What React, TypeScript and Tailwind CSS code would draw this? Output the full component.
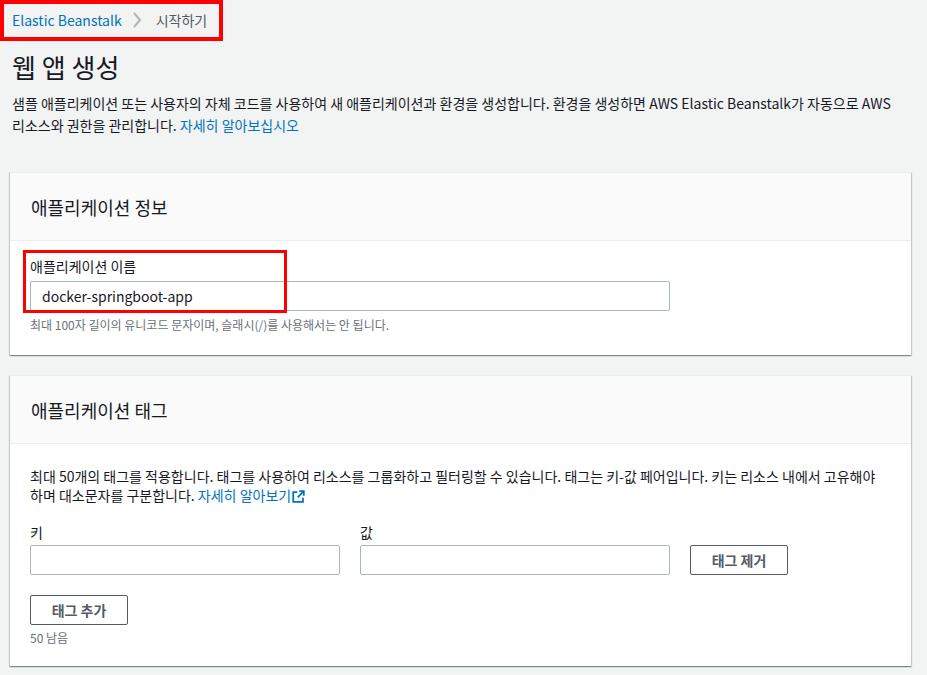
import React from "react";

const font = { fontFamily: '"Noto Sans CJK KR", "Noto Sans", sans-serif' };

function ExtIcon() {
  return (
    <svg width="13" height="13" viewBox="0 0 16 16" className="inline-block ml-[1px] -mt-[2px] align-middle">
      <path d="M9 1.5h5.5V7" fill="none" stroke="#0073bb" strokeWidth="2.2" />
      <path d="M14.5 1.5L7 9" fill="none" stroke="#0073bb" strokeWidth="2.2" />
      <path d="M6.5 2.5H1.5v12h12v-5" fill="none" stroke="#0073bb" strokeWidth="2.2" />
    </svg>
  );
}

const cardCls =
  "bg-white border-t border-[#eaeded] shadow-[0_1px_1px_0_rgba(0,28,36,0.3),1px_1px_1px_0_rgba(0,28,36,0.15),-1px_1px_1px_0_rgba(0,28,36,0.15)]";

export default function App() {
  return (
    <div className="min-h-[675px] w-full bg-[#f2f3f3] text-[#16191f]" style={font}>
      <div className="relative">
        <div className="absolute left-0 top-0 w-[223px] h-[41px] border-[4px] border-[#ff0000] pointer-events-none" />
        <div className="flex items-center h-[40px] pl-[12px] text-[14px] leading-[20px]">
          <span className="text-[#0073bb]">Elastic Beanstalk</span>
          <svg width="10" height="18" viewBox="0 0 10 18" className="ml-[10px] mr-[14px]">
            <path d="M2 2l6 7-6 7" fill="none" stroke="#aab7b8" strokeWidth="2" />
          </svg>
          <span className="text-[#545b64]">시작하기</span>
        </div>
      </div>

      <div className="px-[10px] w-[927px]">
        <div className="pl-[2px] w-[892px]">
          <h1 className="text-[26px] leading-[34px] mt-[10px] text-[#16191f]">웹 앱 생성</h1>
          <p className="text-[14px] leading-[22px] mt-[8px] text-[#16191f] break-keep">
            샘플 애플리케이션 또는 사용자의 자체 코드를 사용하여 새 애플리케이션과 환경을 생성합니다. 환경을 생성하면 AWS Elastic Beanstalk가 자동으로 AWS
            리소스와 권한을 관리합니다. <span className="text-[#0073bb]">자세히 알아보십시오</span>
          </p>
        </div>

        <div className={cardCls + " mt-[36px] w-[901px] relative"}>
          <div className="bg-[#fafafa] border-b border-[#eaeded] h-[68px] flex items-center px-[21px]">
            <h2 className="text-[18px] leading-[24px]">애플리케이션 정보</h2>
          </div>
          <div className="px-[20px] pt-[15px] pb-[22px]">
            <div className="absolute left-[13px] top-[77px] w-[264px] h-[63px] border-[3px] border-[#ff0000] pointer-events-none" />
            <div className="text-[14px] leading-[20px]">애플리케이션 이름</div>
            <div className="mt-[5px] w-[640px] h-[30px] border border-[#aab7b8] rounded-[2px] flex items-center px-[11px] text-[14px]">
              docker-springboot-app
            </div>
            <div className="mt-[6px] text-[12px] leading-[16px] text-[#687078]">
              최대 100자 길이의 유니코드 문자이며, 슬래시(/)를 사용해서는 안 됩니다.
            </div>
          </div>
        </div>

        <div className={cardCls + " mt-[20px] w-[901px]"}>
          <div className="bg-[#fafafa] border-b border-[#eaeded] h-[68px] flex items-center px-[21px]">
            <h2 className="text-[18px] leading-[24px]">애플리케이션 태그</h2>
          </div>
          <div className="px-[20px] pt-[23px] pb-[20px]">
            <p className="text-[14px] leading-[19px] pr-[10px] break-keep">
              최대 50개의 태그를 적용합니다. 태그를 사용하여 리소스를 그룹화하고 필터링할 수 있습니다. 태그는 키-값 페어입니다. 키는 리소스 내에서 고유해야
              하며 대소문자를 구분합니다. <span className="text-[#0073bb]">자세히 알아보기</span>
              <ExtIcon />
            </p>
            <div className="flex items-end mt-[17px]">
              <div className="w-[310px]">
                <div className="text-[14px] leading-[20px]">키</div>
                <div className="mt-[3px] h-[30px] border border-[#aab7b8] rounded-[2px] bg-white" />
              </div>
              <div className="w-[310px] ml-[20px]">
                <div className="text-[14px] leading-[20px]">값</div>
                <div className="mt-[3px] h-[30px] border border-[#aab7b8] rounded-[2px] bg-white" />
              </div>
              <button className="ml-[20px] w-[98px] h-[30px] border border-[#545b64] rounded-[2px] text-[14px] font-bold text-[#545b64] bg-white">
                태그 제거
              </button>
            </div>
            <button className="mt-[20px] w-[98px] h-[30px] border border-[#545b64] rounded-[2px] text-[14px] font-bold text-[#545b64] bg-white">
              태그 추가
            </button>
            <div className="mt-[5px] text-[12px] leading-[16px] text-[#687078]">50 남음</div>
          </div>
        </div>
      </div>
    </div>
  );
}
